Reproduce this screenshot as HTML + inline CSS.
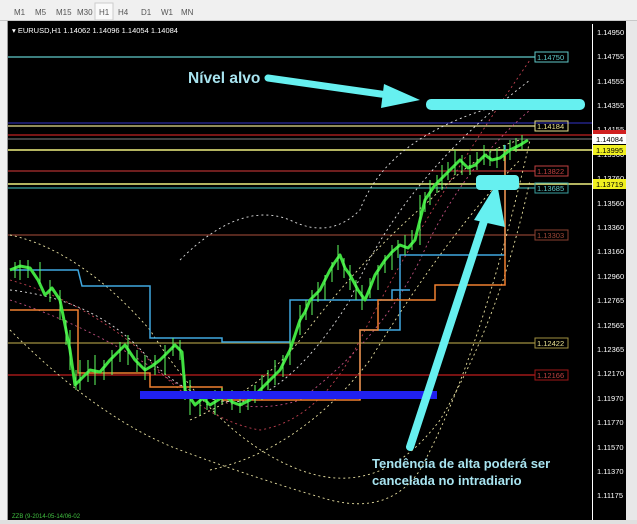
<!DOCTYPE html><html><head><style>
body{margin:0;width:637px;height:524px;overflow:hidden;background:#f0f0f0;font-family:"Liberation Sans",sans-serif}
</style></head><body>
<svg width="637" height="524" style="position:absolute;left:0;top:0" font-family="Liberation Sans, sans-serif">
<rect x="0" y="0" width="637" height="20" fill="#f0f0f0"/>
<line x1="0" y1="20.5" x2="637" y2="20.5" stroke="#c8c8c8"/>
<rect x="95" y="3" width="18" height="17" fill="#fafafa" stroke="#ccc"/>
<g font-size="8" fill="#555">
<text x="14" y="15">M1</text><text x="35" y="15">M5</text><text x="56" y="15">M15</text><text x="77" y="15">M30</text><text x="99" y="15">H1</text><text x="118" y="15">H4</text><text x="141" y="15">D1</text><text x="161" y="15">W1</text><text x="181" y="15">MN</text>
</g>
<rect x="7" y="21" width="619" height="499" fill="#000"/>
<rect x="7" y="21" width="1" height="499" fill="#999"/>
<rect x="626" y="21" width="11" height="503" fill="#e8e8e8"/>
<rect x="0" y="520" width="637" height="4" fill="#e0e0e0"/>
<line x1="592.5" y1="24" x2="592.5" y2="520" stroke="#fff"/>
<text x="12" y="33" font-size="7.5" fill="#fff">▾ EURUSD,H1  1.14062 1.14096 1.14054 1.14084</text>
<g font-size="7.5" fill="#fff">
<text x="597" y="35">1.14950</text><text x="597" y="59">1.14755</text><text x="597" y="84">1.14555</text><text x="597" y="108">1.14355</text><text x="597" y="132">1.14155</text><text x="597" y="157">1.13960</text><text x="597" y="181">1.13760</text><text x="597" y="206">1.13560</text><text x="597" y="230">1.13360</text><text x="597" y="254">1.13160</text><text x="597" y="279">1.12960</text><text x="597" y="303">1.12765</text><text x="597" y="328">1.12565</text><text x="597" y="352">1.12365</text><text x="597" y="376">1.12170</text><text x="597" y="401">1.11970</text><text x="597" y="425">1.11770</text><text x="597" y="450">1.11570</text><text x="597" y="474">1.11370</text><text x="597" y="498">1.11175</text>
</g>
<g stroke-width="1.2">
<line x1="8" y1="57" x2="535" y2="57" stroke="#5fc9c9"/>
<line x1="8" y1="123" x2="592" y2="123" stroke="#2a2aa0"/>
<line x1="8" y1="126" x2="535" y2="126" stroke="#e8e090"/>
<line x1="8" y1="135" x2="592" y2="135" stroke="#c02020"/>
<line x1="8" y1="139" x2="592" y2="139" stroke="#666"/>
<line x1="8" y1="150" x2="592" y2="150" stroke="#f0f080" stroke-width="1.6"/>
<line x1="8" y1="171" x2="535" y2="171" stroke="#b03030"/>
<line x1="8" y1="184" x2="592" y2="184" stroke="#f0f080" stroke-width="1.6"/>
<line x1="8" y1="188" x2="535" y2="188" stroke="#3aa0a0"/>
<line x1="8" y1="235" x2="535" y2="235" stroke="#8a4030"/>
<line x1="8" y1="343" x2="535" y2="343" stroke="#a09040"/>
<line x1="8" y1="375" x2="535" y2="375" stroke="#a01818" stroke-width="1.6"/>
</g>
<g font-size="7.5">
<rect x="535" y="52" width="33" height="10" fill="none" stroke="#5fc9c9"/><text x="537" y="60" fill="#5fc9c9">1.14750</text>
<rect x="535" y="121" width="33" height="10" fill="none" stroke="#e8e090"/><text x="537" y="129" fill="#e8e090">1.14184</text>
<rect x="535" y="166" width="33" height="10" fill="none" stroke="#c04040"/><text x="537" y="174" fill="#c04040">1.13822</text>
<rect x="535" y="183" width="33" height="10" fill="none" stroke="#3aa0a0"/><text x="537" y="191" fill="#5fc9c9">1.13685</text>
<rect x="535" y="230" width="33" height="10" fill="none" stroke="#8a4030"/><text x="537" y="238" fill="#a04838">1.13303</text>
<rect x="535" y="338" width="33" height="10" fill="none" stroke="#a09040"/><text x="537" y="346" fill="#e8e090">1.12422</text>
<rect x="535" y="370" width="33" height="10" fill="none" stroke="#a01818"/><text x="537" y="378" fill="#c04040">1.12166</text>
<rect x="593" y="130" width="33" height="7" fill="#d02020"/>
<rect x="593" y="134" width="33" height="10" fill="#fff"/><text x="596" y="142" fill="#000">1.14084</text>
<rect x="593" y="145" width="33" height="10" fill="#f0f020"/><text x="596" y="153" fill="#000">1.13995</text>
<rect x="593" y="179" width="33" height="10" fill="#f0f020"/><text x="596" y="187" fill="#000">1.13719</text>
</g>
<g fill="none" stroke-dasharray="2,3" stroke-width="0.9">
<path d="M10 235 Q80 250 150 330 Q220 440 300 470 Q380 500 440 420 Q500 320 530 180" stroke="#e8e0a0"/>
<path d="M10 330 Q100 420 180 450 Q260 480 330 500 Q390 515 420 470 Q480 360 530 140" stroke="#e8e0a0"/>
<path d="M10 280 Q80 300 140 350 Q200 420 260 430 Q320 420 360 340 Q420 220 530 60" stroke="#c04050" />
<path d="M10 300 Q100 330 170 380 Q240 420 300 400 Q380 340 420 260 Q460 170 530 110" stroke="#c05080"/>
<path d="M10 290 Q100 300 150 360 Q200 410 250 400 Q300 380 350 300 Q400 180 530 80" stroke="#e0e0e0"/>
<path d="M180 260 Q240 200 290 220 Q330 240 360 210 Q390 130 520 100" stroke="#e0e0e0"/>
<path d="M190 420 Q260 390 300 340 Q360 260 430 200 Q480 150 520 140" stroke="#e8e0a0"/>
<path d="M210 470 Q300 450 370 360 Q450 230 520 160" stroke="#e8e0a0"/>
</g>
<g fill="none" stroke-width="1.5">
<path d="M10 270 H78 L82 286 H150 V338 H222 V342 H290 V300 H392 V290 H410" stroke="#40a8e0"/>
<path d="M360 400 V330 H400 V255 H505 V145" stroke="#40a8e0"/>
<path d="M10 310 H78 V373 H150 V387 H222 V400 H360 V330 H378 V300 H435 V285 H505 V150" stroke="#f08030"/>
</g>
<polyline fill="none" stroke="#40e040" stroke-width="3" stroke-linejoin="round" points="10,270 20,266 30,268 38,280 45,295 52,288 60,300 66,330 70,350 75,385 82,378 90,370 100,372 110,360 118,352 125,345 135,360 145,370 152,366 160,360 168,352 175,345 182,352 185,390 195,405 203,398 210,405 218,400 225,395 232,402 240,405 250,400 258,392 265,385 272,378 280,370 290,350 300,320 305,312 310,300 320,290 325,280 330,270 335,262 340,255 345,268 350,275 358,290 365,300 370,288 375,275 385,260 392,252 400,245 408,248 415,240 420,220 425,200 435,185 440,180 445,175 452,168 460,160 468,168 475,165 485,155 492,160 500,158 510,150 520,145 528,140"/>
<path fill="none" stroke="#60ff60" stroke-width="1" d="M15 262v16M20 260v20M28 260v18M40 262v22M50 280v22M60 290v30M66 320v25M70 330v40M76 370v20M80 360v30M88 360v22M95 355v30M104 360v20M112 350v25M120 342v20M128 335v30M137 350v22M145 355v25M155 355v20M165 345v30M173 338v18M180 340v20M185 375v25M190 380v35M200 395v20M207 392v18M215 390v25M222 388v16M232 390v20M240 395v18M248 390v20M255 385v18M262 375v25M268 370v20M275 360v25M283 355v22M290 340v25M300 305v30M306 300v20M312 290v25M318 282v20M325 275v25M332 262v20M338 245v25M344 258v20M350 265v25M356 280v20M362 285v25M370 278v20M378 265v25M385 255v18M392 245v25M398 240v18M405 235v20M412 230v20M420 195v50M425 192v20M430 180v25M437 175v18M442 165v25M448 162v18M455 150v25M462 155v20M470 155v20M477 152v18M484 145v20M490 150v16M497 148v20M504 145v16M510 140v20M516 138v14M522 135v15"/>
<rect x="140" y="391" width="297" height="8" fill="#2020f0"/>
<rect x="426" y="99" width="159" height="11" rx="5" fill="#66f0f0"/>
<rect x="476" y="175" width="43" height="15" rx="4" fill="#66f0f0"/>
<line x1="268" y1="78" x2="395" y2="96" stroke="#66f0f0" stroke-width="7" stroke-linecap="round"/>
<polygon points="384,84 420,100 381,108" fill="#66f0f0"/>
<line x1="410" y1="447" x2="486" y2="215" stroke="#66f0f0" stroke-width="8" stroke-linecap="round"/>
<polygon points="474,220 497,183 505,227" fill="#66f0f0"/>
<text x="188" y="83" font-size="15.5" font-weight="bold" fill="#a8e4f0">Nível alvo</text>
<text x="372" y="468" font-size="13" font-weight="bold" fill="#a8e4f0">Tendência de alta poderá ser</text>
<text x="372" y="485" font-size="13" font-weight="bold" fill="#a8e4f0">cancelada no intradiario</text>
<text x="12" y="518" font-size="6" fill="#40c040">ZZB (9-2014-05-14/06-02</text>
</svg>
</body></html>
